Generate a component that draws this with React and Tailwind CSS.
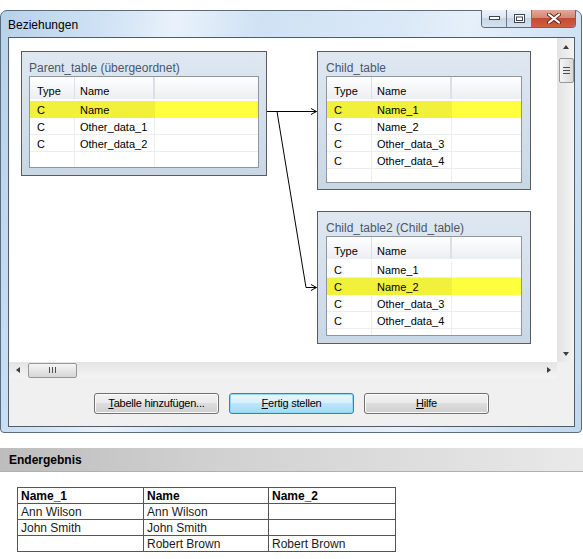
import React from "react";

const parentRows = [
  ["C", "Name"],
  ["C", "Other_data_1"],
  ["C", "Other_data_2"],
  ["", ""],
];
const childRows = [
  ["C", "Name_1"],
  ["C", "Name_2"],
  ["C", "Other_data_3"],
  ["C", "Other_data_4"],
  ["", ""],
];

function Grid({ rows, hl, height }) {
  return (
    <div className={`border border-[#8e969f] bg-white overflow-hidden ${height}`}>
      <div className="flex h-[24px] bg-gradient-to-b from-white to-[#eceef1] border-b-2 border-white text-[11px]">
        <div className="w-[45px] pl-[7px] pt-[6px] border-r border-[#dcdfe3]">Type</div>
        <div className="w-[80px] pl-[5px] pt-[6px] border-r-2 border-[#dcdfe3]">Name</div>
        <div className="flex-1" />
      </div>
      {rows.map((r, i) => {
        const on = i === hl;
        return (
          <div key={i} className="flex h-[17px] text-[11px] leading-[18px]">
            <div className={`w-[45px] pl-[7px] border-b border-r ${on ? "bg-[#f1f13b] border-[#f1f13b]" : "border-[#ededed]"}`}>{r[0]}</div>
            <div className={`w-[80px] pl-[5px] border-b border-r ${on ? "bg-[#f1f13b] border-[#f1f13b]" : "border-[#ededed]"}`}>{r[1]}</div>
            <div className={`flex-1 border-b ${on ? "bg-[#ffff40] border-[#ffff40]" : "border-[#ededed]"}`} />
          </div>
        );
      })}
    </div>
  );
}

function TableBox({ title, rows, hl, pos, pad, height }) {
  return (
    <div className={`absolute border border-[#5b5b5b] bg-gradient-to-b from-[#dfe8f1] to-[#c9d7e5] ${pad} ${pos}`}>
      <div className="h-[24px] pt-[9px] text-[12px] leading-[14px] text-[#4d5569] whitespace-nowrap">{title}</div>
      <Grid rows={rows} hl={hl} height={height} />
    </div>
  );
}

function Tri({ dir }) {
  const pts = {
    up: "0,4 3,0 6,4",
    down: "0,0 6,0 3,4",
    left: "4,0 4,6 0,3",
    right: "0,0 0,6 4,3",
  }[dir];
  const vertical = dir === "up" || dir === "down";
  return (
    <svg width={vertical ? 6 : 4} height={vertical ? 4 : 6} viewBox={vertical ? "0 0 6 4" : "0 0 4 6"}>
      <polygon points={pts} fill="#3c3c3c" />
    </svg>
  );
}

function Button({ children, focus }) {
  return (
    <button
      className={`w-[125px] h-[21px] rounded-[3px] border text-[11px] tracking-[-0.02em] flex items-center justify-center ${
        focus
          ? "border-[#3c7fb1] bg-[linear-gradient(#eaf6fd_0%,#d9f0fc_45%,#bee6fd_50%,#a7d9f5_100%)] shadow-[inset_0_0_0_1px_#8fd8f8]"
          : "border-[#707070] bg-[linear-gradient(#f2f2f2_0%,#ebebeb_45%,#dddddd_50%,#cfcfcf_100%)] shadow-[inset_0_0_0_1px_#fbfbfb]"
      }`}
    >
      {children}
    </button>
  );
}

export default function App() {
  return (
    <div className="w-[583px] h-[559px] overflow-hidden bg-white pt-[10px] font-['Liberation_Sans',Arial,sans-serif] text-black">
      {/* window */}
      <div className="w-[582px] h-[423px] flex flex-col rounded-t-[7px] rounded-b-[4px] border border-[#5a6c80] bg-[linear-gradient(100deg,#b7d1ea_0%,#d3e5f6_18%,#e9f2fb_27%,#cfe2f4_40%,#dbe9f7_62%,#e6f0fa_72%,#c0d8ef_100%)]">
        <div className="h-[26px] flex items-start">
          <div className="pl-[7px] pt-[7px] text-[12px] leading-[14px]">Beziehungen</div>
          <div className="ml-auto mr-[5px] -mt-px flex h-[18px] rounded-b-[4px] border border-t-0 border-[#5b6b7d] overflow-hidden">
            <div className="w-[25px] flex items-center justify-center border-r border-[#6a7a8c] bg-[linear-gradient(#eef3f8_0%,#dde6ef_45%,#c8d6e4_50%,#d6e2ee_100%)]">
              <svg width="11" height="5" viewBox="0 0 11 5">
                <rect x="0.5" y="0.5" width="10" height="3" fill="#fff" stroke="#3b4756" />
              </svg>
            </div>
            <div className="w-[25px] flex items-center justify-center border-r border-[#6a7a8c] bg-[linear-gradient(#eef3f8_0%,#dde6ef_45%,#c8d6e4_50%,#d6e2ee_100%)]">
              <svg width="11" height="9" viewBox="0 0 11 9">
                <rect x="0.5" y="0.5" width="10" height="8" fill="#fff" stroke="#3b4756" />
                <rect x="2.5" y="3" width="6" height="3.5" fill="none" stroke="#3b4756" />
              </svg>
            </div>
            <div className="w-[43px] flex items-center justify-center bg-[linear-gradient(#e7a698_0%,#d98675_45%,#c54a33_50%,#d35c43_100%)]">
              <svg width="14" height="11" viewBox="0 0 14 11">
                <path d="M2 1.5 L12 9.5 M12 1.5 L2 9.5" stroke="#6b241b" strokeWidth="4" strokeLinecap="round" />
                <path d="M2 1.5 L12 9.5 M12 1.5 L2 9.5" stroke="#ffffff" strokeWidth="2.2" strokeLinecap="round" />
              </svg>
            </div>
          </div>
        </div>

        {/* client area */}
        <div className="ml-[7px] mr-[6px] h-[390px] border border-[#4e5d6e] bg-[#f0f0f0] flex flex-col">
          <div className="grid grid-cols-[548px_17px] grid-rows-[324px_16px]">
            {/* canvas */}
            <div className="relative bg-white overflow-hidden">
              <TableBox
                title="Parent_table (übergeordnet)"
                rows={parentRows}
                hl={0}
                pos="left-[12px] top-[13px] w-[246px] h-[125px]"
                pad="px-[7px]"
                height="h-[92px]"
              />
              <TableBox
                title="Child_table"
                rows={childRows}
                hl={0}
                pos="left-[308px] top-[13px] w-[214px] h-[139px]"
                pad="px-[8px]"
                height="h-[107px]"
              />
              <TableBox
                title="Child_table2 (Child_table)"
                rows={childRows}
                hl={1}
                pos="left-[308px] top-[173px] w-[214px] h-[133px]"
                pad="px-[8px]"
                height="h-[100px]"
              />
              <svg className="absolute inset-0 pointer-events-none" width="548" height="324" viewBox="0 0 548 324">
                <g stroke="#000" strokeWidth="1" fill="none">
                  <path d="M258 73.5 H307.5" />
                  <path d="M302 70.5 L307.5 73.5 L302 76.5" />
                  <path d="M268 73.5 L297 249.5 H307.5" />
                  <path d="M302 246.5 L307.5 249.5 L302 252.5" />
                </g>
              </svg>
            </div>

            {/* vertical scrollbar */}
            <div className="relative bg-gradient-to-r from-[#e4e4e4] to-[#f4f4f4] border-l border-[#e6e6e6] flex flex-col items-center">
              <div className="h-[17px] flex items-center justify-center"><Tri dir="up" /></div>
              <div className="mt-[3px] w-[15px] h-[25px] rounded-[2px] border border-[#979797] bg-gradient-to-r from-[#f5f5f5] to-[#d9d9d9] flex flex-col items-center justify-center gap-[2px]">
                <div className="w-[7px] h-px bg-[#4f4f4f]" />
                <div className="w-[7px] h-px bg-[#4f4f4f]" />
                <div className="w-[7px] h-px bg-[#4f4f4f]" />
              </div>
              <div className="mt-auto h-[17px] flex items-center justify-center"><Tri dir="down" /></div>
            </div>

            {/* horizontal scrollbar */}
            <div className="bg-gradient-to-b from-[#e4e4e4] to-[#f4f4f4] flex items-center">
              <div className="w-[17px] h-full flex items-center justify-center"><Tri dir="left" /></div>
              <div className="ml-[2px] w-[49px] h-[15px] rounded-[2px] border border-[#979797] bg-gradient-to-b from-[#f5f5f5] to-[#d6d6d6] flex items-center justify-center gap-[2px]">
                <div className="w-px h-[6px] bg-[#4f4f4f]" />
                <div className="w-px h-[6px] bg-[#4f4f4f]" />
                <div className="w-px h-[6px] bg-[#4f4f4f]" />
              </div>
              <div className="ml-auto w-[17px] h-full flex items-center justify-center"><Tri dir="right" /></div>
            </div>
            <div className="bg-[#f0f0f0]" />
          </div>

          <div className="flex-1 flex justify-center gap-[10px] pt-[15px]">
            <Button><span><u>T</u>abelle hinzufügen...</span></Button>
            <Button focus><span><u>F</u>ertig stellen</span></Button>
            <Button><span><u>H</u>ilfe</span></Button>
          </div>
        </div>
      </div>

      {/* result */}
      <div className="mt-[15px] h-[24px] flex items-center pl-[9px] text-[12px] font-bold border-b border-[#b0b0b0] bg-[linear-gradient(90deg,#bdbdbd_0%,#d0d0d0_35%,#dfdfdf_75%,#e9e9e9_100%)]">
        Endergebnis
      </div>
      <table className="mt-[15px] ml-[17px] border-collapse text-[12px] leading-[14px] text-[#1a1a1a]">
        <thead>
          <tr className="h-[16px]">
            <th className="w-[126px] border border-[#555] px-[3px] text-left font-bold text-black">Name_1</th>
            <th className="w-[125px] border border-[#555] px-[3px] text-left font-bold text-black">Name</th>
            <th className="w-[127px] border border-[#555] px-[3px] text-left font-bold text-black">Name_2</th>
          </tr>
        </thead>
        <tbody>
          {[
            ["Ann Wilson", "Ann Wilson", ""],
            ["John Smith", "John Smith", ""],
            ["", "Robert Brown", "Robert Brown"],
          ].map((r, i) => (
            <tr key={i} className="h-[16px]">
              {r.map((c, j) => (
                <td key={j} className="border border-[#555] px-[3px]">{c}</td>
              ))}
            </tr>
          ))}
        </tbody>
      </table>
    </div>
  );
}
